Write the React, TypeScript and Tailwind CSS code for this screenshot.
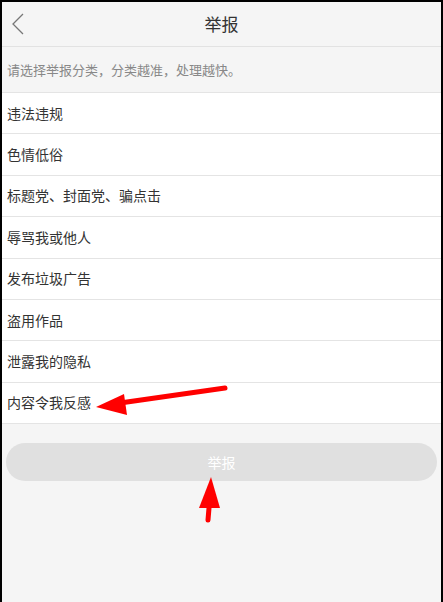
import React from "react";

const items = [
  "违法违规",
  "色情低俗",
  "标题党、封面党、骗点击",
  "辱骂我或他人",
  "发布垃圾广告",
  "盗用作品",
  "泄露我的隐私",
  "内容令我反感",
];

export default function App() {
  return (
    <div
      className="relative h-[602px] w-[443px] overflow-hidden bg-[#f5f5f5] border-l-2 border-t-2 border-r-2 border-black"
      style={{ fontFamily: '"Noto Sans CJK SC", "Noto Sans", sans-serif' }}
    >
      <div className="relative flex h-[45px] items-center justify-center border-b border-[#e2e2e2] bg-[#f5f5f5]">
        <svg className="absolute left-[9px] top-[11px]" width="14" height="22" viewBox="0 0 14 22">
          <path d="M12 1 L2 11 L12 21" fill="none" stroke="#777" strokeWidth="1.3" />
        </svg>
        <span className="text-[17px] text-[#333]">举报</span>
      </div>
      <div className="flex h-[46px] items-center border-b border-[#e4e4e4] px-[5px] text-[13px] text-[#888]">
        请选择举报分类，分类越准，处理越快。
      </div>
      <div className="bg-white">
        {items.map((t, i) => (
          <div
            key={i}
            className="flex h-[41.4px] items-center border-b border-[#e4e4e4] px-[5px] text-[14px] text-[#333]"
          >
            {t}
          </div>
        ))}
      </div>
      <div className="px-[4px] pt-[19px]">
        <div className="flex h-[38px] items-center justify-center rounded-full bg-[#e0e0e0] text-[14px] text-white">
          举报
        </div>
      </div>
      <svg className="pointer-events-none absolute left-0 top-0" width="443" height="602" viewBox="0 0 443 602">
        <line x1="223" y1="386" x2="118" y2="401" stroke="#f00" strokeWidth="5" strokeLinecap="round" />
        <polygon points="94,405 122,392 125,413" fill="#f00" />
        <line x1="206" y1="518" x2="208" y2="494" stroke="#f00" strokeWidth="5" strokeLinecap="round" />
        <polygon points="209,475 197,506 218,506" fill="#f00" />
      </svg>
    </div>
  );
}
